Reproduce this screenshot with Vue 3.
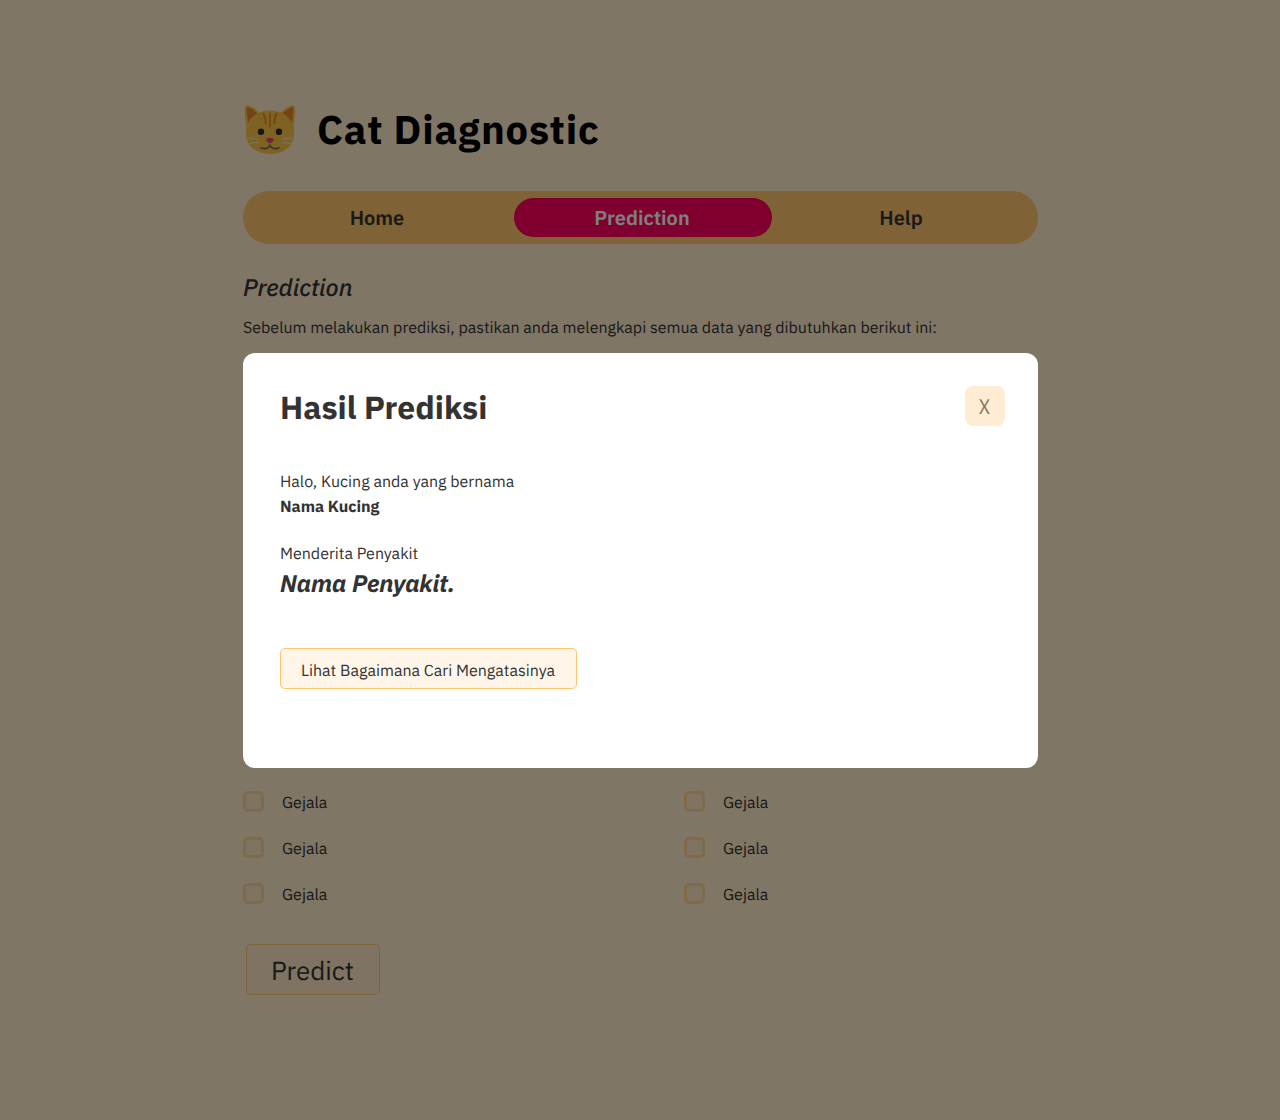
<script setup>
import { ref } from 'vue'

const tabs = ['Home', 'Prediction', 'Help']
const active = ref('Prediction')
const symptoms = ref(Array.from({ length: 6 }, () => ({ name: 'Gejala' })))
</script>

<template>
  <div class="page">
    <main class="content">
      <header class="brand">
        <svg class="logo" viewBox="0 0 54 54" width="54" height="54" aria-hidden="true">
          <path d="M4 27C1.800 19 1.200 9 2.500 5.300c.4-1.200 2-1.200 3.500-.5 3.500 1.500 8 4.200 11 7.700z" fill="#fcc446" />
          <path d="M50 27c2.200-8 2.800-18 1.500-21.700-.4-1.200-2-1.200-3.500-.5-3.500 1.500-8 4.200-11 7.700z" fill="#fcc446" />
          <path d="M4 7c.2-.8 1-1 2-.5 3 1.500 6.500 3.700 8.700 6.500-3.700 2.500-6.900 5.500-8.900 9.500C4.100 17.500 3.400 10.500 4 7z" fill="#e8872a" />
          <path d="M50 7c-.2-.8-1-1-2-.5-3 1.500-6.500 3.700-8.700 6.500 3.700 2.500 6.900 5.500 8.900 9.500 1.700-5 2.400-12 1.800-15.500z" fill="#e8872a" />
          <path d="M27 9.500C14.500 9.500 2.800 17 2.800 32.500 2.800 45.500 14 53 27 53s24.200-7.500 24.200-20.500C51.200 17 39.500 9.500 27 9.500z" fill="#fcc446" />
          <g fill="none" stroke="#e8872a" stroke-width="1.800" stroke-linecap="round">
            <path d="M27 12.500v13M20.500 12.500c1.500 3.500 2.300 6 2.300 10M33.500 12.500c-1.500 3.500-2.300 6-2.300 10" />
          </g>
          <circle cx="18" cy="30.800" r="3.200" fill="#2b2f33" />
          <circle cx="36" cy="30.800" r="3.200" fill="#2b2f33" />
          <g fill="none" stroke="#f9e4a8" stroke-width="1.100" stroke-linecap="round">
            <path d="M2 38c5-1 9-1 13 .5M4 44c4-2.500 7-3 11-2.500M52 38c-5-1-9-1-13 .5M50 44c-4-2.500-7-3-11-2.500" />
          </g>
          <path d="M23.200 38.200c0-1.500 7.600-1.500 7.600 0 0 1.800-2.200 4.200-3.800 4.200s-3.800-2.400-3.800-4.200z" fill="#e0506e" />
          <path d="M18 46.800c3 1.400 7.500 1 9-2.300 1.500 3.300 6 3.700 9 2.300" fill="none" stroke="#6b6a62" stroke-width="1.600" stroke-linecap="round" />
        </svg>
        <h1>Cat Diagnostic</h1>
      </header>

      <nav class="tabs">
        <a v-for="tab in tabs" :key="tab" :class="['tab', { active: tab === active }]" @click="active = tab">{{ tab }}</a>
      </nav>

      <h2>Prediction</h2>
      <p class="intro">Sebelum melakukan prediksi, pastikan anda melengkapi semua data yang dibutuhkan berikut ini:</p>

      <form class="form" @submit.prevent>
        <div class="symptoms">
          <label v-for="(s, i) in symptoms" :key="i" class="symptom">
            <span class="box"></span><span class="name">{{ s.name }}</span>
          </label>
        </div>
        <button class="predict" type="submit">Predict</button>
      </form>
    </main>

    <div class="overlay">
      <section class="modal" role="dialog">
        <div class="modal-head">
          <h3>Hasil Prediksi</h3>
          <button class="close" type="button"><span>X</span></button>
        </div>
        <p class="line hello">Halo, Kucing anda yang bernama</p>
        <p class="line cat-name">Nama Kucing</p>
        <p class="line suffers">Menderita Penyakit</p>
        <p class="disease">Nama Penyakit.</p>
        <button class="solution" type="button">Lihat Bagaimana Cari Mengatasinya</button>
      </section>
    </div>
  </div>
</template>

<style>
body {
  margin: 0;
  background: #ffeccd;
}
</style>

<style scoped>
.page {
  position: relative;
  box-sizing: border-box;
  height: 1120px;
  overflow: hidden;
  background: #ffeccd;
  color: #333;
  font: 400 16px/20px "IBM Plex Sans", Roboto, sans-serif;
  text-rendering: geometricPrecision;
}
h1, h2, h3, p { margin: 0; }
button {
  box-sizing: border-box;
  margin: 0;
  font: inherit;
  color: inherit;
  text-rendering: inherit;
}
.content {
  box-sizing: border-box;
  width: 795px;
  margin-left: 243px;
  padding-top: 101px;
}
.brand {
  display: flex;
  align-items: flex-start;
  height: 90px;
}
.logo { flex: none; }
h1 {
  margin: 2px 0 0 20px;
  font-size: 40px;
  line-height: 52px;
  font-weight: 700;
  letter-spacing: 0.02em;
  color: #000;
}
.tabs {
  box-sizing: border-box;
  display: flex;
  height: 53px;
  padding: 7px 8px 7px 5px;
  border-radius: 26px;
  background: #ffc56b;
}
.tab {
  box-sizing: border-box;
  width: 258px;
  height: 39px;
  border-radius: 20px;
  text-align: center;
  font-size: 20px;
  line-height: 39px;
  font-weight: 600;
}
.tab:first-child { margin-right: 8px; }
.tab.active {
  padding-right: 2px;
  background: #ff005f;
  color: #fff;
}
h2 {
  margin-top: 27px;
  font-size: 24px;
  line-height: 32px;
  font-weight: 500;
  font-style: italic;
}
.intro { margin-top: 15px; }
.form { margin-top: 453px; }
.symptoms {
  display: grid;
  grid-template-columns: 441px 1fr;
  row-gap: 25px;
}
.symptom {
  display: flex;
  align-items: center;
  height: 21px;
}
.box {
  box-sizing: border-box;
  width: 21px;
  height: 21px;
  border: 3px solid #ffd692;
  border-radius: 5px;
  background: #ffe8c4;
}
.name {
  margin: 3px 0 0 18px;
}
.predict {
  display: block;
  width: 134px;
  height: 51px;
  margin: 40px 0 0 3px;
  padding: 3px 1px 0 0;
  border: 1px solid #ffc56b;
  border-radius: 5px;
  background: #ffe9c6;
  font-size: 26px;
  line-height: 34px;
}
.overlay {
  position: absolute;
  inset: 0;
  display: flex;
  align-items: flex-start;
  padding: 353px 0 0 243px;
  background: rgba(0, 0, 0, 0.5);
}
.modal {
  box-sizing: border-box;
  width: 795px;
  height: 415px;
  padding: 33px 33px 0 37px;
  border-radius: 12px;
  background: #fff;
}
.modal-head {
  display: flex;
  justify-content: space-between;
  align-items: flex-start;
}
h3 {
  font-size: 32px;
  line-height: 42px;
  font-weight: 700;
}
.close {
  width: 40px;
  height: 40px;
  padding: 0 2px 1px 0;
  border: 0;
  border-radius: 8px;
  background: #ffecd2;
  color: #807669;
  font-size: 21px;
  line-height: 26px;
}
.close span {
  display: inline-block;
  transform: scaleX(0.88);
}
.hello { margin-top: 44px; }
.cat-name {
  margin-top: 5px;
  font-weight: 700;
}
.suffers { margin-top: 27px; }
.disease {
  margin-top: 3px;
  font-size: 24px;
  line-height: 32px;
  font-weight: 700;
  font-style: italic;
}
.solution {
  display: block;
  width: 297px;
  height: 41px;
  margin-top: 49px;
  padding: 5px 1px 0 0;
  border: 1px solid #ffc56b;
  border-radius: 5px;
  background: #fff6e9;
}
</style>
